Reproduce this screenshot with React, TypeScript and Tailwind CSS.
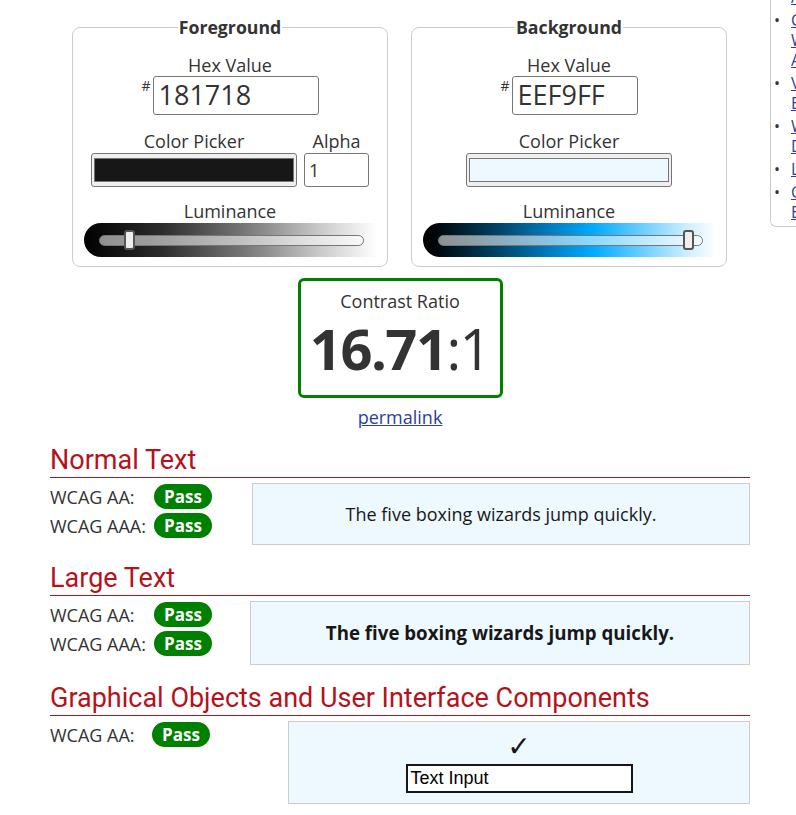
import React from 'react';

type SliderProps = { gradient: 'fg' | 'bg'; thumb: number };

function LumSlider({ gradient, thumb }: SliderProps) {
  const bar =
    gradient === 'fg'
      ? 'bg-[linear-gradient(to_right,#000_0%,#2a292a_25%,#777_55%,#c8c8c8_80%,#fff_100%)]'
      : 'bg-[linear-gradient(to_right,#000_2%,#00324c_20%,#0078b8_42%,#00aaff_58%,#66ccff_74%,#cdeeff_90%,#fff_100%)]';
  return (
    <div className={`relative mt-px h-[34px] w-[293px] rounded-l-full ${bar}`}>
      <div className="absolute left-[15px] top-[12px] h-[11px] w-[265px] rounded-full border border-[#767676] bg-white/55" />
      <div
        className="absolute top-[7px] h-[20px] w-[11px] rounded-[3px] border-2 border-[#555] bg-[#eee]"
        style={{ left: thumb }}
      />
    </div>
  );
}

function ColorSwatch({ color }: { color: string }) {
  return (
    <div className="flex h-[34px] w-[206px] items-center rounded-[3px] border border-[#767676] bg-[#efefef] px-[2px]">
      <div className="h-[24px] w-full border border-[#777]" style={{ background: color }} />
    </div>
  );
}

function ColorFieldset({
  title,
  hex,
  hexWidth,
  color,
  alpha,
  gradient,
  thumb,
}: {
  title: string;
  hex: string;
  hexWidth: string;
  color: string;
  alpha: boolean;
  gradient: 'fg' | 'bg';
  thumb: number;
}) {
  return (
    <fieldset className="w-[316px] rounded-lg border border-[#ccc] px-2 pb-[9px]">
      <legend className="mx-auto px-[1px] text-[17.7px] font-bold leading-[23px] text-[#333]">{title}</legend>
      <div className="flex flex-col items-center">
        <div className="mt-[15px] leading-[22px]">Hex Value</div>
        <div className="flex items-start">
          <span className="mr-[2px] mt-[3px] text-[14px] leading-[14px]">#</span>
          <div className={`flex h-[39px] ${hexWidth} items-center rounded-[3px] border border-[#767676] pl-[5px] text-[27px] text-[#333]`}>
            {hex}
          </div>
        </div>
        <div className="mt-[15px] flex items-end gap-[7px]">
          <div className="flex flex-col items-center">
            <div className="leading-[22px]">Color Picker</div>
            <div className="mt-px">
              <ColorSwatch color={color} />
            </div>
          </div>
          {alpha && (
            <div className="flex flex-col items-center">
              <div className="leading-[22px]">Alpha</div>
              <div className="mt-px flex h-[34px] w-[65px] items-center rounded-[3px] border border-[#767676] pl-[4px] text-[18px] text-[#333]">
                1
              </div>
            </div>
          )}
        </div>
        <div className="mt-[13px] leading-[22px]">Luminance</div>
        <LumSlider gradient={gradient} thumb={thumb} />
      </div>
    </fieldset>
  );
}

function Pass() {
  return (
    <span className="flex h-[25px] w-[58px] items-center justify-center rounded-full bg-[#008000] text-[17px] font-bold text-white">
      Pass
    </span>
  );
}

function ResultRow({ label, labelWidth }: { label: string; labelWidth: string }) {
  return (
    <div className="flex h-[29px] items-center">
      <span className={`${labelWidth} leading-[22px]`}>{label}</span>
      <Pass />
    </div>
  );
}

function SectionHeading({ children }: { children: React.ReactNode }) {
  return (
    <h2 className="border-b border-[#a51c1c] pb-[1px] font-['Roboto',sans-serif] text-[27px] leading-[32px] text-[#b5121b]">
      {children}
    </h2>
  );
}

const sideItems: string[][] = [
  ['Accessibility'],
  ['Contrast and Color', 'WCAG 2 Contrast', 'Accessibility'],
  ['Visual Disabilities', 'Evaluating Contrast'],
  ['WAVE Web Accessibility', 'Developer Tools'],
  ['Link Contrast Checker'],
  ['Color Contrast', 'Evaluation Tools'],
];

export default function App() {
  return (
    <div className="relative flex h-[815px] w-[796px] overflow-hidden bg-white font-['Open_Sans',sans-serif] text-[18px] text-[#333]">
      <main className="w-[770px] shrink-0 pl-[50px] pr-[20px]">
        <div className="mt-[16px] flex justify-center gap-[23px] pr-[1px]">
          <ColorFieldset
            title="Foreground"
            hex="181718"
            hexWidth="w-[166px]"
            color="#181718"
            alpha
            gradient="fg"
            thumb={40}
          />
          <ColorFieldset
            title="Background"
            hex="EEF9FF"
            hexWidth="w-[126px]"
            color="#EEF9FF"
            alpha={false}
            gradient="bg"
            thumb={260}
          />
        </div>

        <div className="mt-[11px] flex flex-col items-center">
          <div className="flex h-[120px] w-[205px] flex-col items-center rounded-md border-[3px] border-[#008000] pt-[9px]">
            <div className="leading-[22px]">Contrast Ratio</div>
            <div className="mt-[6px] text-[56px] leading-[60px] tracking-[-1.5px] text-[#333]">
              <span className="font-bold">16.71</span>
              <span>:1</span>
            </div>
          </div>
          <a href="#" className="mt-[8px] leading-[22px] text-[#2d3e9e] underline">
            permalink
          </a>
        </div>

        <section className="mt-[16px]">
          <SectionHeading>Normal Text</SectionHeading>
          <div className="mt-[5px] flex items-start">
            <div className="-mt-px w-[202px]">
              <ResultRow label="WCAG AA:" labelWidth="w-[104px]" />
              <ResultRow label="WCAG AAA:" labelWidth="w-[104px]" />
            </div>
            <div className="flex h-[62px] flex-1 items-center justify-center border border-[#ccc] bg-[#eef9ff] text-[#181718]">
              The five boxing wizards jump quickly.
            </div>
          </div>
        </section>

        <section className="mt-[17px]">
          <SectionHeading>Large Text</SectionHeading>
          <div className="mt-[5px] flex items-start">
            <div className="-mt-px w-[200px]">
              <ResultRow label="WCAG AA:" labelWidth="w-[104px]" />
              <ResultRow label="WCAG AAA:" labelWidth="w-[104px]" />
            </div>
            <div className="flex h-[64px] flex-1 items-center justify-center border border-[#ccc] bg-[#eef9ff] text-[18.7px] font-bold text-[#181718]">
              The five boxing wizards jump quickly.
            </div>
          </div>
        </section>

        <section className="mt-[17px]">
          <SectionHeading>Graphical Objects and User Interface Components</SectionHeading>
          <div className="mt-[5px] flex items-start">
            <div className="-mt-px w-[238px]">
              <ResultRow label="WCAG AA:" labelWidth="w-[102px]" />
            </div>
            <div className="flex h-[83px] flex-1 flex-col items-center border border-[#ccc] bg-[#eef9ff] pt-[10px]">
              <span className="font-['DejaVu_Sans',sans-serif] text-[28px] leading-[30px] text-[#181718]">✓</span>
              <div className="mt-[2px] flex h-[29px] w-[227px] items-center border-2 border-[#181718] bg-white pl-[3px] font-['Liberation_Sans',Arial,sans-serif] text-[18px] text-black">
                Text Input
              </div>
            </div>
          </div>
        </section>
      </main>

      <aside className="-mt-[13px] h-[240px] w-[220px] shrink-0 rounded-bl-md border-b border-l border-[#ccc] bg-white pb-[10px] pl-[3px] text-[16px]">
        <ul className="flex flex-col gap-[3px]">
          {sideItems.map((lines, i) => (
            <li key={i} className="flex">
              <span className="w-[17px] shrink-0 leading-[20px] text-[#333]">•</span>
              <a href="#" className="flex flex-col whitespace-nowrap text-[#2d3e9e] underline">
                {lines.map((l, j) => (
                  <span key={j} className="leading-[20px]">
                    {l}
                  </span>
                ))}
              </a>
            </li>
          ))}
        </ul>
      </aside>
    </div>
  );
}
